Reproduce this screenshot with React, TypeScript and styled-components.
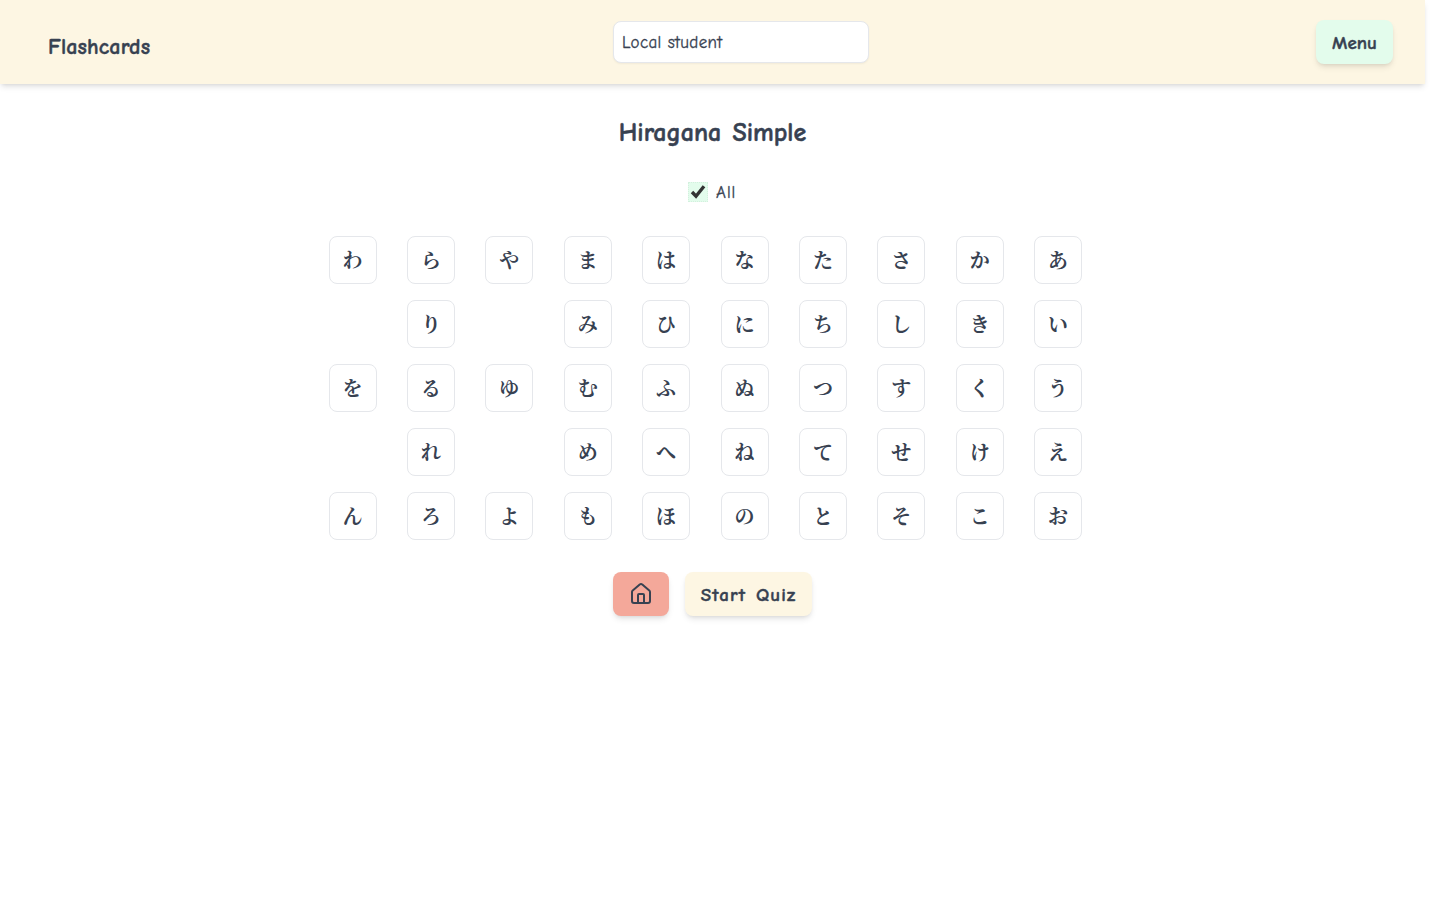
import React from 'react';
import styled, { createGlobalStyle, css } from 'styled-components';

const ink = '#374151';
const lifted = css`
  box-shadow: 0 4px 6px -1px rgba(0, 0, 0, 0.1), 0 2px 4px -2px rgba(0, 0, 0, 0.1);
`;

const GlobalStyle = createGlobalStyle`
  *, *::before, *::after { box-sizing: border-box; }
  body {
    margin: 0;
    background: #fff;
    color: ${ink};
    font-family: "Comic Sans MS", "Comic Neue", "Open Sans", "Noto Sans CJK JP", sans-serif;
    font-size: 16px;
    line-height: 24px;
  }
`;

const Page = styled.div`
  min-height: 100vh;
  padding-right: 15px;
`;

const Header = styled.header`
  display: flex;
  align-items: center;
  justify-content: space-between;
  height: 84px;
  padding: 0 32px;
  background: #fdf6e3;
  ${lifted}
`;

const Brand = styled.div`
  width: 134px;
  padding: 9px 0 0 16px;
  font-size: 22px;
  line-height: 28px;
  font-weight: 700;
  letter-spacing: 0.15px;
  -webkit-text-stroke: 0.4px ${ink};
`;

const StudentInput = styled.input`
  width: 256px;
  height: 42px;
  padding: 0 8px;
  border: 1px solid #e5e7eb;
  border-radius: 8px;
  background: #fff;
  box-shadow: 0 1px 2px rgba(0, 0, 0, 0.05);
  color: ${ink};
  font: inherit;
  font-size: 17px;
  letter-spacing: 0.35px;
  -webkit-text-stroke: 0.3px ${ink};
`;

const Button = styled.button<{ $tone: string; $width: number }>`
  display: flex;
  align-items: center;
  justify-content: center;
  width: ${(p) => p.$width}px;
  height: 44px;
  padding: 0;
  border: 0;
  border-radius: 8px;
  background: ${(p) => p.$tone};
  color: ${ink};
  font: inherit;
  font-size: 19px;
  font-weight: 700;
  line-height: 28px;
  white-space: nowrap;
  ${lifted}
`;

const ButtonLabel = styled.span<{ $spacing?: number }>`
  padding-top: 1px;
  letter-spacing: ${(p) => p.$spacing ?? 0}px;
  word-spacing: 2px;
  -webkit-text-stroke: 0.4px ${ink};
`;

const Main = styled.main`
  display: flex;
  flex-direction: column;
  align-items: center;
  padding-top: 33px;
`;

const Title = styled.h1`
  margin: 0;
  font-size: 26px;
  line-height: 32px;
  font-weight: 700;
  word-spacing: 2px;
  white-space: nowrap;
  -webkit-text-stroke: 0.5px ${ink};
`;

const AllToggle = styled.div`
  display: flex;
  align-items: center;
  gap: 8px;
  height: 24px;
  margin: 31px 0 32px;
  font-size: 17px;
  letter-spacing: 1px;
  -webkit-text-stroke: 0.3px ${ink};
`;

const AllLabel = styled.span`
  width: 21px;
  padding-top: 2px;
`;

const CheckBox = styled.span`
  display: flex;
  width: 20px;
  height: 20px;
  border: 1px dotted #d3f0de;
  background: #e3fcec;
`;

const KanaGrid = styled.div`
  display: grid;
  grid-template-columns: repeat(10, minmax(0, 1fr));
  gap: 16px;
  width: 768px;
`;

const KanaCell = styled.div`
  display: flex;
  align-items: center;
  justify-content: center;
  width: 48px;
  height: 48px;
  border: 1px solid #e5e7eb;
  border-radius: 8px;
  font-family: "Noto Serif CJK JP", "Noto Sans CJK JP", serif;
  font-size: 20px;
  font-weight: 700;
  line-height: 28px;
`;

const Actions = styled.div`
  display: flex;
  gap: 16px;
  margin-top: 32px;
`;

const rows = [
  'わらやまはなたさかあ',
  ' り みひにちしきい',
  'をるゆむふぬつすくう',
  ' れ めへねてせけえ',
  'んろよもほのとそこお',
];

const HomeIcon = () => (
  <svg width="24" height="24" viewBox="0 0 24 24" fill="none" stroke="currentColor" strokeWidth="2" strokeLinecap="round" strokeLinejoin="round">
    <path d="M15 21v-8a1 1 0 0 0-1-1h-4a1 1 0 0 0-1 1v8" />
    <path d="M3 10a2 2 0 0 1 .709-1.528l7-6a2 2 0 0 1 2.582 0l7 6A2 2 0 0 1 21 10v9a2 2 0 0 1-2 2H5a2 2 0 0 1-2-2z" />
  </svg>
);

const CheckMark = () => (
  <svg width="18" height="18" viewBox="0 0 18 18" fill="none" stroke="#333" strokeWidth="3.4">
    <path d="M3 9 7 13.2 15 3.2" />
  </svg>
);

export default function App() {
  return (
    <Page>
      <GlobalStyle />
      <Header>
        <Brand>Flashcards</Brand>
        <StudentInput defaultValue="Local student" />
        <Button $tone="#e3fcec" $width={77}><ButtonLabel>Menu</ButtonLabel></Button>
      </Header>
      <Main>
        <Title>Hiragana Simple</Title>
        <AllToggle>
          <CheckBox><CheckMark /></CheckBox>
          <AllLabel>All</AllLabel>
        </AllToggle>
        <KanaGrid>
          {rows.flatMap((row, r) =>
            [...row].map((kana, c) =>
              kana === ' ' ? <span key={`${r}-${c}`} /> : <KanaCell key={`${r}-${c}`}>{kana}</KanaCell>
            )
          )}
        </KanaGrid>
        <Actions>
          <Button $tone="#f4a89a" $width={56} aria-label="Home"><HomeIcon /></Button>
          <Button $tone="#fdf6e3" $width={127}><ButtonLabel $spacing={1.1}>Start Quiz</ButtonLabel></Button>
        </Actions>
      </Main>
    </Page>
  );
}
